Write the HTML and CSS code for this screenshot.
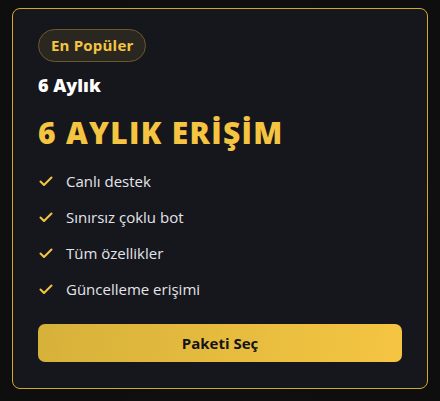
FILE: index.html
```html
<!DOCTYPE html>
<html lang="tr">
<head>
<meta charset="utf-8">
<link rel="stylesheet" href="styles.css">
</head>
<body>
<div class="card">
  <span class="badge">En Popüler</span>
  <div class="period">6 Aylık</div>
  <h2 class="title">6 AYLIK ERİŞİM</h2>
  <ul class="features">
    <li><svg class="check" viewBox="0 0 16 16"><path d="M2.5 8.5 L6 12 L13.5 4.5" /></svg>Canlı destek</li>
    <li><svg class="check" viewBox="0 0 16 16"><path d="M2.5 8.5 L6 12 L13.5 4.5" /></svg>Sınırsız çoklu bot</li>
    <li><svg class="check" viewBox="0 0 16 16"><path d="M2.5 8.5 L6 12 L13.5 4.5" /></svg>Tüm özellikler</li>
    <li><svg class="check" viewBox="0 0 16 16"><path d="M2.5 8.5 L6 12 L13.5 4.5" /></svg>Güncelleme erişimi</li>
  </ul>
  <button class="cta">Paketi Seç</button>
</div>
</body>
</html>
```
FILE: styles.css
```css
html, body {
  margin: 0;
  height: 100%;
}
body {
  background: radial-gradient(ellipse at 50% 50%, #17150f 0%, #0e0e0f 80%);
  font-family: "Open Sans", "Noto Sans", sans-serif;
  padding: 8px 12px 12px;
  box-sizing: border-box;
}
.card {
  border: 1px solid #d4a72c;
  border-radius: 8px;
  background: #16171c;
  padding: 20px 25px 26px;
  display: flex;
  flex-direction: column;
  align-items: flex-start;
}
.badge {
  display: inline-block;
  padding: 0 12px;
  height: 31px;
  line-height: 31px;
  border: 1px solid #6b5a2c;
  border-radius: 17px;
  background: #2a2720;
  color: #f5c542;
  font-weight: 700;
  font-size: 15px;
  letter-spacing: 0.2px;
}
.period {
  margin-top: 11px;
  color: #ffffff;
  font-weight: 800;
  font-size: 18px;
  line-height: 24px;
}
.title {
  margin: 17px 0 0;
  color: #f5c542;
  font-weight: 800;
  font-size: 30px;
  line-height: 37px;
  letter-spacing: 1.3px;
}
.features {
  list-style: none;
  margin: 19px 0 0;
  padding: 0;
  display: flex;
  flex-direction: column;
  gap: 14px;
}
.features li {
  display: flex;
  align-items: center;
  gap: 12px;
  color: #e4e4ea;
  font-size: 15px;
  line-height: 22px;
}
.check {
  width: 16px;
  height: 16px;
  fill: none;
  stroke: #f5c542;
  stroke-width: 2;
  stroke-linecap: round;
  stroke-linejoin: round;
}
.cta {
  margin-top: 24px;
  width: 100%;
  height: 38px;
  border: none;
  border-radius: 7px;
  background: linear-gradient(100deg, #d6b13a 0%, #f5c542 100%);
  color: #141418;
  font-family: inherit;
  font-weight: 700;
  font-size: 15px;
  cursor: pointer;
}
```
